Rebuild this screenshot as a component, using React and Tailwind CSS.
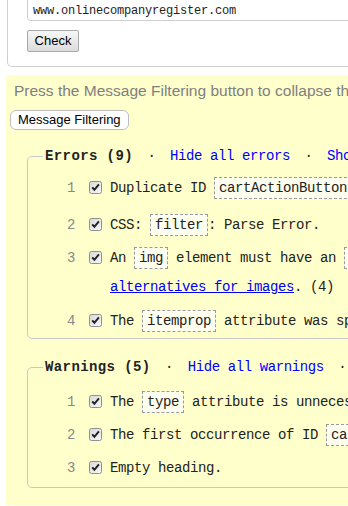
import React from 'react';

const Tick = () => (
  <svg width="13" height="13" viewBox="0 0 13 13" className="flex-none">
    <defs>
      <linearGradient id="cbg" x1="0" y1="0" x2="1" y2="1">
        <stop offset="0" stopColor="#d9d9d9" />
        <stop offset="1" stopColor="#f8f8f8" />
      </linearGradient>
    </defs>
    <rect x="0.5" y="0.5" width="12" height="12" rx="2" fill="url(#cbg)" stroke="#8f8f8f" />
    <path d="M3.2 6.4 L5.4 8.8 L9.9 3.4" fill="none" stroke="#222" strokeWidth="2" />
  </svg>
);

const Code = ({ children }) => (
  <span className="inline-block border border-dashed border-[#9a9a9a] bg-[#fffff0] px-[4px] leading-[20px]">
    {children}
  </span>
);

const Row = ({ n, className = '', children }) => (
  <li className={`flex items-start leading-[29px] ${className}`}>
    <span className="w-[47px] flex-none text-right text-[#888]">{n}</span>
    <span className="ml-[14px] mt-[7px] flex-none">
      <Tick />
    </span>
    <span className="ml-[8px] whitespace-nowrap text-[#222]">{children}</span>
  </li>
);

const Legend = ({ title, hide, show }) => (
  <legend className="ml-[15px] px-[2px] leading-[22px] whitespace-nowrap">
    <span className="font-bold tracking-[0.4px] text-[#222]">{title}</span>
    <span className="inline-block w-[37px] text-center text-[#222]">·</span>
    <a className="text-[#0000ff]">{hide}</a>
    <span className="inline-block w-[37px] text-center text-[#222]">·</span>
    <a className="text-[#0000ff]">{show}</a>
  </legend>
);

export default function App() {
  return (
    <div className="w-[348px] h-[506px] overflow-hidden bg-white font-['Liberation_Sans',Arial,sans-serif]">
      {/* url form, top cut off */}
      <div className="-mt-[6px] ml-[7px] w-[900px] border-x border-b border-[#cfcfcf] rounded-b-[5px] pl-[19px] pb-[14px]">
        <div className="h-[27px] border border-[#cfcfcf] rounded-[4px] pt-[8px] pl-[5px] font-['Liberation_Mono',monospace] text-[12px] leading-[16px] tracking-[-0.2px] text-[#222]">
          www.onlinecompanyregister.com
        </div>
        <button className="mt-[9px] h-[22px] w-[52px] border border-[#a9a9a9] rounded-[2px] bg-linear-to-b from-[#f7f7f7] to-[#dcdcdc] text-[13px] text-black">
          Check
        </button>
      </div>

      {/* results */}
      <div className="mt-[8px] ml-[6px] w-[1100px] bg-[#ffffcc] pt-[6px] pb-[17px] pl-[4px]">
        <p className="ml-[4px] whitespace-nowrap text-[15.5px] leading-[20px] text-[#808080]">
          Press the Message Filtering button to collapse the filtering options and error/warning/info counts.
        </p>
        <button className="mt-[9px] block h-[20px] px-[7px] border border-[#bdbdbd] rounded-[6px] bg-white text-[13px] leading-[18px] text-black">
          Message Filtering
        </button>

        <div className="font-['Liberation_Mono',monospace] text-[14px] tracking-[-0.4px]">
          <fieldset className="mt-[15px] ml-[17px] w-[1000px] border border-[#c8c8c8] rounded-[5px] pb-[2px]">
            <Legend title="Errors (9)" hide="Hide all errors" show="Show all errors" />
            <ol className="pt-[7px]">
              <Row n="1">
                Duplicate ID <Code>cartActionButton</Code>.
              </Row>
              <Row n="2" className="mt-[8px]">
                CSS: <Code>filter</Code>: Parse Error.
              </Row>
              <Row n="3" className="mt-[4px]">
                An <Code>img</Code> element must have an <Code>alt</Code> attribute, except under certain conditions. For details, consult guidance on <a className="text-[#0000ee] underline">providing text<br />alternatives for images</a>. (4)
              </Row>
              <Row n="4" className="mt-[5px]">
                The <Code>itemprop</Code> attribute was specified, but the element is not a property of any item.
              </Row>
            </ol>
          </fieldset>

          <fieldset className="mt-[17px] ml-[17px] w-[1000px] border border-[#c8c8c8] rounded-[5px] pb-[4px]">
            <Legend title="Warnings (5)" hide="Hide all warnings" show="Show all warnings" />
            <ol className="pt-[10px]">
              <Row n="1">
                The <Code>type</Code> attribute is unnecessary for JavaScript resources.
              </Row>
              <Row n="2" className="mt-[4px]">
                The first occurrence of ID <Code>cartActionButton</Code> was here.
              </Row>
              <Row n="3" className="mt-[4px]">
                Empty heading.
              </Row>
            </ol>
          </fieldset>
        </div>
      </div>
    </div>
  );
}
